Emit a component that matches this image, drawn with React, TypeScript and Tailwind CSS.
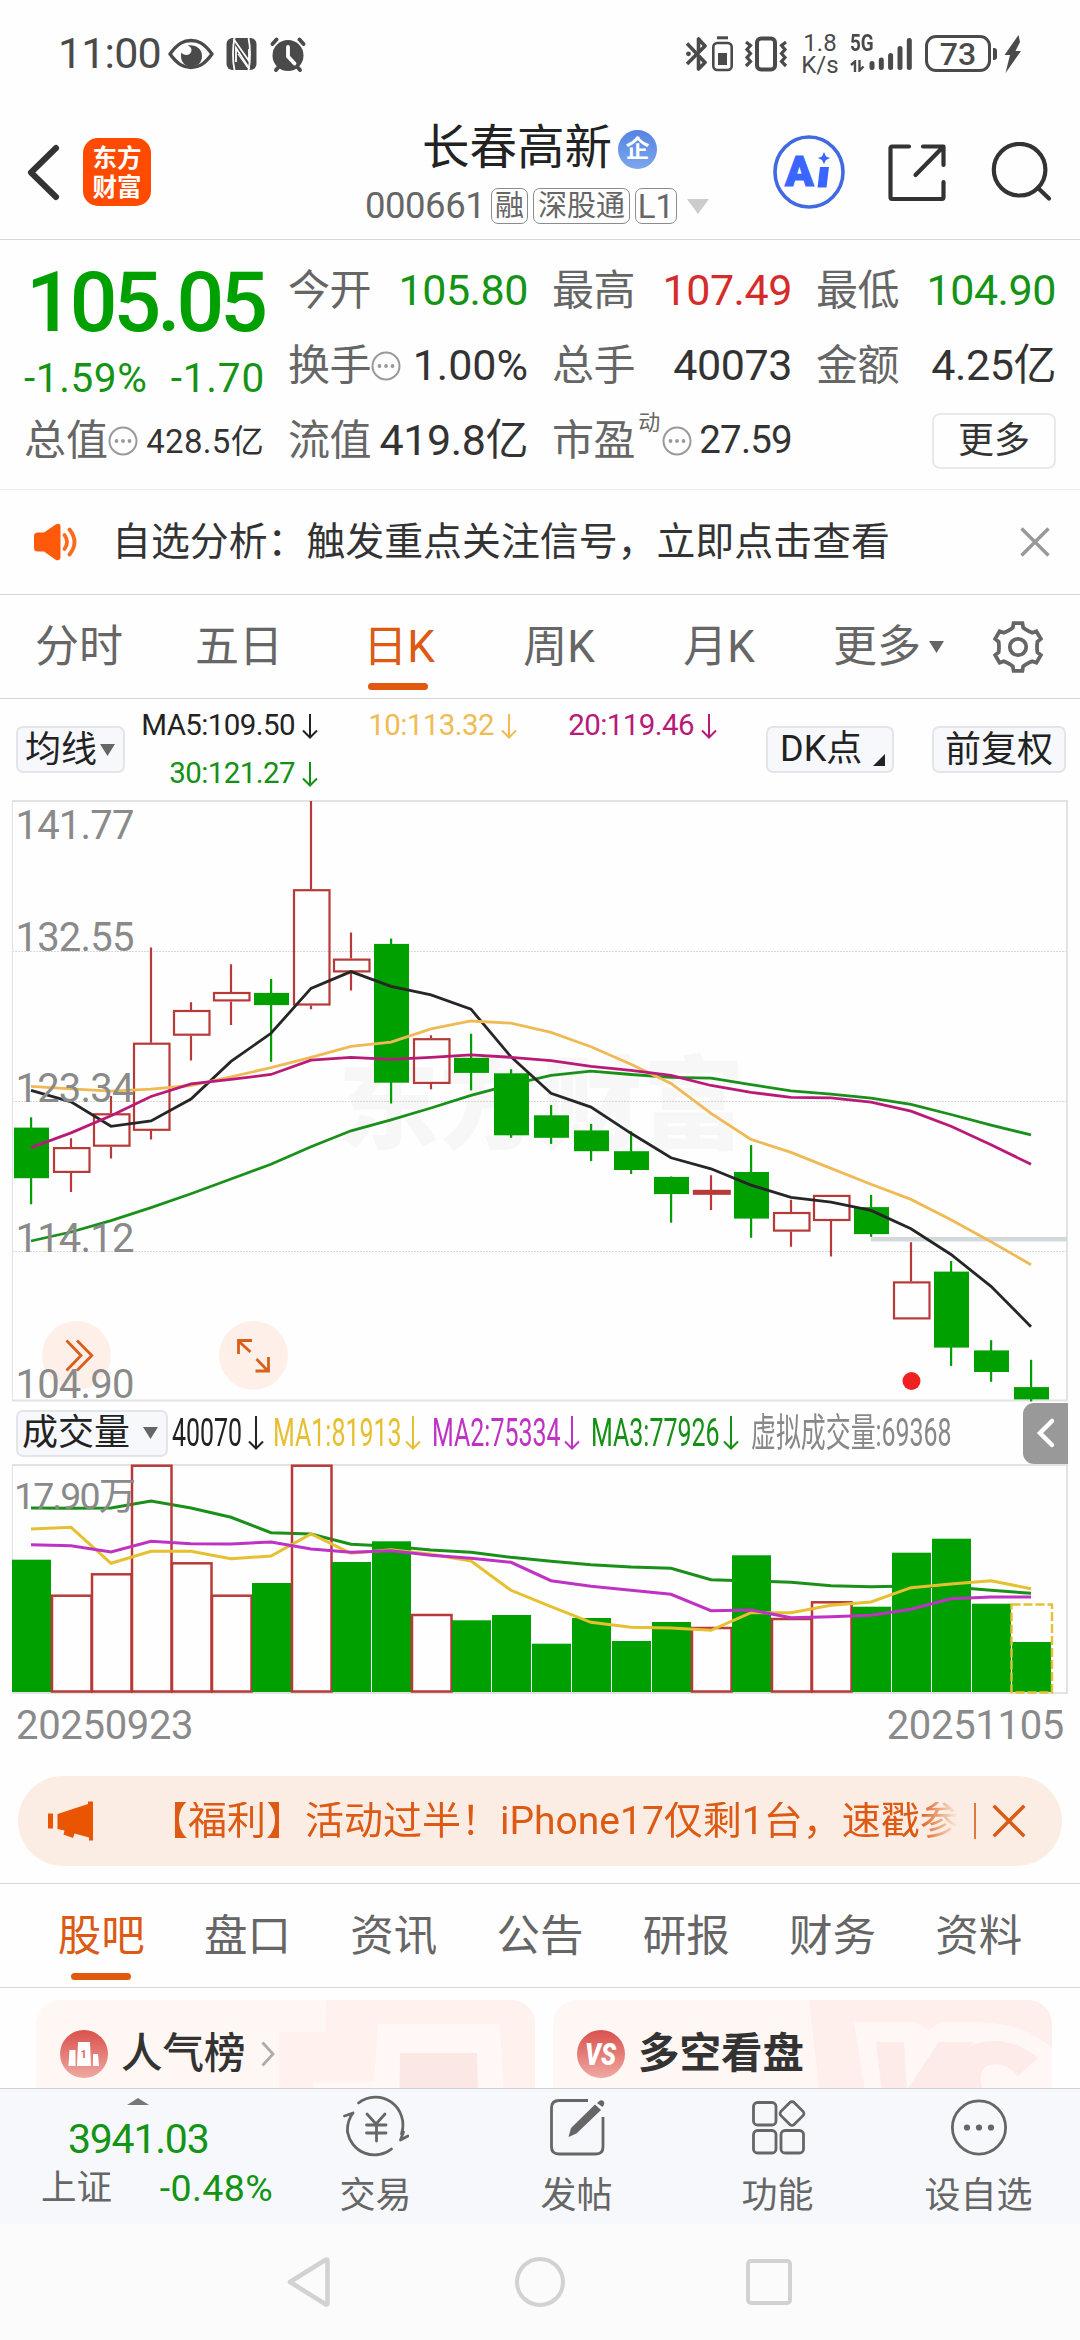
import React from "react";

type Candle = { up: boolean; hi: number; lo: number; top: number; bot: number };

const c = (up: number, hi: number, lo: number, top: number, bot: number): Candle => ({ up: up === 1, hi, lo, top, bot });

const candles: Candle[] = [
  c(0, 327.3, 414.3, 337.6, 388.2),
  c(1, 348.2, 402, 357.1, 382.9),
  c(1, 306.1, 368.6, 323.3, 356.7),
  c(1, 157.6, 349.4, 252.7, 340.8),
  c(1, 212.2, 270.6, 220, 245.7),
  c(1, 174.3, 235.1, 202, 211.4),
  c(0, 189, 271.8, 202.9, 215.1),
  c(1, 11, 219.2, 99.2, 215.5),
  c(1, 142.4, 200.4, 168.6, 182.4),
  c(0, 148.6, 313.5, 153.9, 292.7),
  c(1, 245.3, 299.2, 248.2, 293.9),
  c(0, 243.7, 300.4, 267.8, 282.9),
  c(0, 279.2, 347.8, 283.3, 345.3),
  c(0, 315.1, 353.9, 325.3, 347.8),
  c(0, 333.9, 371, 340.4, 361.2),
  c(0, 341.2, 384, 361.2, 380),
  c(0, 386.5, 432.7, 386.9, 404.1),
  c(1, 385.3, 420, 400, 404.5),
  c(0, 355.1, 447.8, 382, 428.6),
  c(1, 409.8, 456.7, 422, 441.6),
  c(1, 405.3, 466.5, 404.9, 431),
  c(0, 404.9, 446.9, 417.1, 444.1),
  c(1, 452.2, 529.4, 491.4, 529.4),
  c(0, 471, 575.9, 481.6, 557.6),
  c(0, 550.2, 591.8, 560.4, 582),
  c(0, 569.8, 611.4, 597.1, 609.4),
];

const ma5 = [300.4, 311.8, 336.3, 331, 309, 271.4, 243.3, 198.4, 181.6, 196.3, 204.9, 219.2, 266.9, 303.3, 317.1, 343.3, 367.8, 378.8, 395.1, 407.3, 412.2, 420.4, 438.8, 464.5, 496.3, 536.7];
const ma10 = [296.3, 298.8, 301.2, 299.2, 295.5, 286.9, 277.6, 267.3, 256.3, 252.2, 238.8, 231, 233.1, 242.4, 256.7, 274.3, 293.5, 323.3, 349.4, 362.4, 378.4, 394.3, 409.4, 429.8, 451.8, 474.7];
const ma20 = [357.6, 342.9, 325.7, 306.5, 293.9, 289.4, 284.5, 270.2, 267.3, 269.4, 267.3, 264.9, 267.3, 270.6, 276.3, 280.4, 285.3, 295.5, 302.4, 307.3, 307.8, 312.2, 321.2, 336.3, 354.7, 374.3];
const ma30 = [451, 442, 430.6, 417.6, 403.7, 389, 374.3, 356.7, 340.8, 329.8, 318, 305.3, 294.7, 285.3, 281.2, 284.5, 287.3, 288.2, 294.7, 300.8, 304.1, 308.2, 314.3, 324.5, 335.1, 344.9];

const volTop = [159.7, 195.7, 174.3, 65.7, 163.3, 195.7, 183, 65.7, 162, 141.3, 215, 220.3, 215, 243.7, 218, 241, 222, 228, 155.3, 219, 202.3, 206.7, 152.7, 138.7, 203.7, 242];
const volHollow = [1, 2, 3, 4, 5, 7, 10, 17, 19, 20];
const vol1 = [129, 127.3, 163.3, 151.3, 151.3, 158.7, 156, 134, 153.3, 149.7, 154.3, 161, 190.3, 206.7, 222.3, 227.3, 228, 230.3, 212.7, 212.7, 205.3, 202, 187.7, 184, 180.7, 188.7];
const vol2 = [144.7, 145.7, 152, 141.3, 143.7, 144, 142, 149, 152.3, 150.7, 155.3, 158.3, 162.3, 180.7, 186.3, 190.3, 194.3, 210.7, 210, 217.7, 216.7, 215.3, 209.3, 198.7, 197, 197];
const vol3 = [108, 108.3, 108, 101, 108, 117.3, 132.7, 134, 144.3, 146.3, 150, 152.3, 157.3, 161.3, 164.7, 167, 168.3, 179.7, 181, 182.3, 185.7, 186.7, 186, 187, 190.3, 193.3];

const cx = (i: number) => 31 + 40 * i;
const pts = (a: number[]) => a.map((y, i) => `${cx(i)},${y}`).join(" ");

const RED = "#b83a38";
const GREEN = "#00a000";

function PriceChart() {
  const labels: [string, number][] = [
    ["141.77", 49],
    ["132.55", 161],
    ["123.34", 312],
    ["114.12", 462],
    ["104.90", 608],
  ];
  return (
    <svg className="block overflow-visible" width="1080" height="602" viewBox="0 10 1080 602">
      <text x="338" y="351" fontSize="101" fontWeight="900" fill="#f7f7f7" textLength="406">东方财富</text>
      {[161.5, 311.5, 461.5].map((y) => (
        <line key={y} x1="12" x2="1067" y1={y} y2={y} stroke="#d9d9d9" strokeWidth="1" strokeDasharray="2 1" />
      ))}
      <path d="M12.5 11V611" stroke="#e2e2e2" strokeWidth="1" />
      <path d="M12 11H1067V610.5H12" stroke="#e2e2e2" strokeWidth="2" fill="none" />
      <rect x="871" y="447" width="196" height="4.5" fill="#d3d8da" />
      <polyline points={pts(ma30)} fill="none" stroke="#1a901a" strokeWidth="2.8" />
      {candles.map((k, i) => {
        const x = cx(i);
        return k.up ? (
          <g key={i} stroke={RED} strokeWidth="2.2" fill="none">
            <path d={`M${x} ${k.hi}V${k.top}M${x} ${k.bot}V${k.lo}`} />
            <rect x={x - 17} y={k.top + 1} width="35.5" height={k.bot - k.top - 2} fill="none" />
            {i === 17 && <rect x={x - 17} y="401" width="35.5" height="2.5" fill={RED} />}
          </g>
        ) : (
          <g key={i} fill={GREEN}>
            <rect x={x - 1} y={k.hi} width="2.2" height={k.lo - k.hi} />
            <rect x={x - 17} y={k.top} width="35" height={k.bot - k.top} />
          </g>
        );
      })}
      <g fill="none" strokeWidth="2.8">
        <polyline points={pts(ma5)} stroke="#262626" />
        <polyline points={pts(ma10)} stroke="#efba55" />
        <polyline points={pts(ma20)} stroke="#b91a78" />
      </g>
      <circle cx="911.5" cy="591" r="9" fill="#f02020" />
      <circle cx="76.5" cy="565.3" r="34.5" fill="#fef0e9" />
      <circle cx="253.5" cy="565.3" r="34.5" fill="#fef0e9" />
      <g fill="none" stroke="#d9601a" strokeWidth="2.8">
        <path d="M66.5 550.5L81 565.5L66.5 580.5M77 550.5L91.8 565.5L77 580.5" />
        <path d="M238.5 564V550.5H252M239 551.5L250.5 562M255.5 581H268.5V567M267.5 580.5L256.5 569" />
      </g>
      {labels.map(([t, y]) => (
        <text key={t} x="15.5" y={y - 0.5} fontSize="40" fill="#8a8a8a" letterSpacing="-0.8">
          {t}
        </text>
      ))}
    </svg>
  );
}

function VolumeChart() {
  return (
    <svg className="block" width="1080" height="232" viewBox="0 64 1080 232">
      <path d="M12.5 65V293" stroke="#e2e2e2" strokeWidth="1" />
      <path d="M12 65H1067V293H12" stroke="#e2e2e2" strokeWidth="2" fill="none" />
      <polyline points={pts(vol3)} fill="none" stroke="#1a901a" strokeWidth="3" />
      {volTop.map((t, i) => {
        const x = cx(i);
        return volHollow.includes(i) ? (
          <rect key={i} x={x - 19} y={t} width="39.5" height={291.5 - t} fill="none" stroke={RED} strokeWidth="2.5" />
        ) : (
          <rect key={i} x={x - 19} y={t} width="39" height={292 - t} fill={GREEN} />
        );
      })}
      <rect x="1011.5" y="204.5" width="40.5" height="88" fill="none" stroke="#e6bf35" strokeWidth="2.4" strokeDasharray="9 3" />
      <g fill="none" strokeWidth="3">
        <polyline points={pts(vol1)} stroke="#e6c030" />
        <polyline points={pts(vol2)} stroke="#be32c4" />
      </g>
      <text x="14" y="108.5" fontSize="37.5" fill="#8a8a8a" letterSpacing="-1.9">
        17.90万
      </text>
    </svg>
  );
}

function Dots() {
  return (
    <svg width="30" height="30" viewBox="0 0 30 30" className="shrink-0">
      <circle cx="15" cy="15" r="13.5" fill="none" stroke="#999" strokeWidth="2" />
      <g fill="#999">
        <circle cx="8.5" cy="15" r="1.9" />
        <circle cx="15" cy="15" r="1.9" />
        <circle cx="21.5" cy="15" r="1.9" />
      </g>
    </svg>
  );
}

function Arrow({ h = 25 }: { h?: number }) {
  return (
    <svg width="16" height={h} viewBox={`0 0 16 ${h}`} fill="none" stroke="currentColor" strokeWidth="2" className="shrink-0">
      <path d={`M8 0V${h - 1.5}M1 ${h - 8.5}L8 ${h - 1.5}L15 ${h - 8.5}`} />
    </svg>
  );
}

function Tri({ className }: { className: string }) {
  return (
    <svg viewBox="0 0 10 8" preserveAspectRatio="none" className={className}>
      <path d="M0 0H10L5 8Z" fill="currentColor" />
    </svg>
  );
}

function Cross({ className }: { className: string }) {
  return (
    <svg viewBox="0 0 30 30" className={className} fill="none" stroke="currentColor">
      <path d="M1.5 1.5L28.5 28.5M28.5 1.5L1.5 28.5" />
    </svg>
  );
}

function Gear() {
  const tooth = [
    [-7.6, -17.6],
    [-5.2, -19.4],
    [-4.4, -23.8],
    [4.4, -23.8],
    [5.2, -19.4],
    [7.6, -17.6],
  ];
  const p: string[] = [];
  for (let k = 0; k < 6; k++) {
    const a = (k * Math.PI) / 3;
    for (const [x, y] of tooth) p.push(`${x * Math.cos(a) - y * Math.sin(a)},${x * Math.sin(a) + y * Math.cos(a)}`);
  }
  return (
    <svg width="54" height="54" viewBox="-27 -27 54 54" fill="none" stroke="#666" strokeWidth="3.8">
      <polygon points={p.join(" ")} />
      <circle r="8.2" />
    </svg>
  );
}

function StatusBar() {
  return (
    <div className="flex h-[107px] items-center text-[#4a4a4a]">
      <span className="ml-[58px] w-[110px] text-[43px] tracking-[-0.02em] leading-none">11:00</span>
      <svg width="46" height="34" viewBox="0 0 46 34" fill="none">
        <path d="M2 17C10 6 16 3.5 23 3.5S36 6 44 17C36 28 30 30.5 23 30.5S10 28 2 17Z" stroke="#4a4a4a" strokeWidth="3.4" strokeLinejoin="round" />
        <path d="M20 8.5C28 7.5 34 12 34 19C34 26 29 29.5 23 29.5C17 29.5 13 25 13 19C13 17.5 13.2 16.5 13.5 15.5C15 18.5 20 19 22.5 16C24.5 13.5 23.5 10 20 8.5Z" fill="#4a4a4a" />
      </svg>
      <svg width="31" height="34" viewBox="0 0 31 34" className="ml-[12px]">
        <rect x="0.5" y="1" width="30" height="32" rx="6" fill="#4a4a4a" />
        <g fill="none" stroke="#fff" strokeWidth="1.8">
          <path d="M8.5 1C6.5 10 6.5 24 8.5 33M22.5 1C24.5 10 24.5 24 22.5 33" />
          <path d="M7.5 2L23 24V12M23.5 32L10 11V25" />
          <path d="M12 17L22 31" strokeWidth="1.2" />
        </g>
      </svg>
      <svg width="36" height="36" viewBox="0 0 36 36" className="ml-[13px]" fill="none" stroke="#4a4a4a" strokeLinecap="round">
        <circle cx="18" cy="19.5" r="15.5" fill="#4a4a4a" stroke="none" />
        <path d="M2.5 8L6.5 3.5M33.5 8L29.5 3.5" strokeWidth="3.8" />
        <path d="M6 34L9 30.5M30 34L27 30.5" strokeWidth="3.8" />
        <path d="M18 11V20.5L24.5 27.5" stroke="#fff" strokeWidth="3.8" />
      </svg>
      <svg width="22" height="36" viewBox="0 0 22 36" className="ml-[380px]" fill="none" stroke="#4a4a4a" strokeWidth="3.6">
        <path d="M1 7.5L19 26.5L12.5 33V21M1 28L19 10L12.5 3V15" strokeLinejoin="round" />
        <circle cx="2.5" cy="17.8" r="2.4" fill="#4a4a4a" stroke="none" />
      </svg>
      <svg width="21" height="36" viewBox="0 0 21 36" className="ml-[4px]" fill="none" stroke="#4a4a4a">
        <path d="M5 1.8H16" strokeWidth="3" />
        <rect x="1.3" y="7" width="18.4" height="27" rx="4" strokeWidth="2.6" />
        <rect x="6" y="17" width="9" height="12" fill="#4a4a4a" stroke="none" />
      </svg>
      <svg width="44" height="36" viewBox="0 0 44 36" className="ml-[11px]" fill="none" stroke="#4a4a4a" strokeWidth="3.2">
        <rect x="13" y="2.5" width="18" height="31" rx="4" strokeWidth="4" />
        <path d="M2 6L6.5 9.5L3 13.5L6.5 17.5L3 21.5L6.5 25.5L2 30" />
        <path d="M42 6L37.5 9.5L41 13.500L37.500 17.500L41 21.500L37.500 25.500L42 30" />
      </svg>
      <div className="ml-[13px] flex w-[38px] flex-col items-center text-[24px] leading-[22px]">
        <span>1.8</span>
        <span>K/s</span>
      </div>
      <div className="ml-[11px] flex h-[36px] w-[20px] flex-col justify-between">
        <span className="mt-[-2px] origin-left scale-x-[0.82] text-[23px] font-bold leading-[20px]">5G</span>
        <svg width="15" height="12" viewBox="0 0 15 12" fill="none" stroke="#4a4a4a" strokeWidth="2.4">
          <path d="M1 5L5 1.5V12M9.5 0V10.5L13.5 6.5" />
        </svg>
      </div>
      <svg width="44" height="36" viewBox="0 0 44 36" className="ml-[-1px]" stroke="#4a4a4a" strokeWidth="5" strokeLinecap="round">
        <path d="M3 27.5V31.5M12.3 24V31.5M21.6 19.5V31.5M31 12.5V31.5M40.3 4.5V31.5" />
      </svg>
      <div className="ml-[12px] flex h-[37px] w-[66px] items-center justify-center rounded-[11px] border-[3px] border-[#4a4a4a] text-[32px] font-medium leading-none">
        73
      </div>
      <div className="ml-[2px] h-[12px] w-[4px] rounded-r-[3px] bg-[#4a4a4a]" />
      <svg width="17" height="38" viewBox="0 0 17 38" className="ml-[7px]">
        <path d="M14.5 0L0.500 20H6L1.500 38L17 16H11.500L16 7Z" fill="#4a4a4a" />
      </svg>
    </div>
  );
}

function Header() {
  return (
    <div className="flex h-[133px] border-b border-[#d6d6d6]">
      <svg width="36" height="60" viewBox="0 0 36 60" className="ml-[25px] mt-[35px]" fill="none" stroke="#333" strokeWidth="6" strokeLinecap="round" strokeLinejoin="round">
        <path d="M31 6L6 30.5L31 55" />
      </svg>
      <div className="ml-[22px] mt-[31px] flex h-[68px] w-[68px] flex-col items-center justify-center rounded-[15px] bg-[#ff4a00] pt-[2px] text-[24.5px] font-bold leading-[29px] text-white">
        <span>东方</span>
        <span>财富</span>
      </div>
      <div className="ml-[214px] flex w-[346px] flex-col">
        <div className="mt-[14px] flex h-[56px] items-center">
          <span className="ml-[57px] text-[47.5px] leading-none text-[#222]">长春高新</span>
          <span className="ml-[6px] flex h-[39px] w-[39px] items-center justify-center rounded-full bg-linear-to-b from-[#5583e2] to-[#7ca7ec] text-[24px] font-bold leading-none text-white">
            企
          </span>
        </div>
        <div className="mt-[10px] flex h-[38px] items-center text-[29px] leading-none text-[#666]">
          <span className="w-[126px] text-[36.5px] tracking-[-0.013em]">000661</span>
          <span className="flex h-[36px] w-[37px] items-center justify-center rounded-[7px] border border-[#8c8c8c]">融</span>
          <span className="ml-[5px] flex h-[36px] w-[97px] items-center justify-center rounded-[7px] border border-[#8c8c8c]">深股通</span>
          <span className="ml-[5px] flex h-[36px] w-[42px] items-center justify-center rounded-[7px] border border-[#8c8c8c] text-[33px]">L1</span>
          <Tri className="ml-[10px] h-[15px] w-[22px] text-[#ccc]" />
        </div>
      </div>
      <svg width="74" height="76" viewBox="0 0 74 76" className="ml-[61px] mt-[27px]">
        <ellipse cx="37" cy="38" rx="34" ry="35" fill="none" stroke="#4169e1" strokeWidth="3.6" />
        <text x="13" y="51.5" fontSize="42" fontWeight="900" fill="#3a66ff" stroke="#3a66ff" strokeWidth="1.2">A</text>
        <path d="M48 33H57L54.5 53.5H45.5Z" fill="#3a66ff" />
        <path d="M52 18L54 22.5L58 24L54 26L52 30L50 26L46 24L50 22.5Z" fill="#3a66ff" />
      </svg>
      <svg width="62" height="62" viewBox="0 0 62 62" className="ml-[40px] mt-[35px]" fill="none" stroke="#333" strokeWidth="4.2" strokeLinecap="round" strokeLinejoin="round">
        <path d="M23 4.5H6Q4.5 4.5 4.5 6V55Q4.5 57 6 57H56Q57.5 57 57.5 55V40M37 4.5H57.5V23M57 5L29.5 33" />
      </svg>
      <svg width="64" height="64" viewBox="0 0 64 64" className="ml-[40px] mt-[35px]" fill="none" stroke="#333" strokeWidth="4.2" strokeLinecap="round">
        <circle cx="31.6" cy="27.7" r="25.8" />
        <path d="M50 46L61 56.5" />
      </svg>
    </div>
  );
}

function Quote({ label, value, color }: { label: string; value: string; color: string }) {
  return (
    <div className="flex items-center justify-between">
      <span className="text-[42px] text-[#666]">{label}</span>
      <span className={color}>{value}</span>
    </div>
  );
}

function Quotes() {
  return (
    <div className="flex h-[250px] border-b border-[#ebebeb] pl-[24px] leading-none">
      <div className="flex w-[240px] flex-col">
        <div className="mt-[21px] flex h-[84px] items-center pl-[2px] text-[84px] font-medium tracking-[-0.048em] text-[#00a000]">105.05</div>
        <div className="mt-[11px] flex h-[44px] items-center justify-between text-[40.5px] text-[#149414]">
          <span className="tracking-[0.015em]">-1.59%</span>
          <span className="mr-[-1px] tracking-[0.02em]">-1.70</span>
        </div>
        <div className="mt-[19px] flex h-[44px] items-center text-[#333]">
          <span className="text-[42px] text-[#666]">总值</span>
          <Dots />
          <span className="ml-auto text-[33px] tracking-[0.01em]">428.5亿</span>
        </div>
      </div>
      <div className="ml-[24px] grid h-[238px] w-[768px] grid-cols-3 grid-rows-3 gap-x-[24px] pt-[13px] text-[43px] tracking-[-0.01em] text-[#333]">
        <Quote label="今开" value="105.80" color="text-[#149414]" />
        <Quote label="最高" value="107.49" color="text-[#d52b2b]" />
        <Quote label="最低" value="104.90" color="text-[#149414]" />
        <div className="flex items-center">
          <span className="text-[42px] text-[#666]">换手</span>
          <Dots />
          <span className="ml-auto tracking-[0em]">1.00%</span>
        </div>
        <Quote label="总手" value="40073" color="text-[#333]" />
        <Quote label="金额" value="4.25亿" color="text-[#333]" />
        <Quote label="流值" value="419.8亿" color="text-[#333]" />
        <div className="flex items-center">
          <span className="text-[42px] text-[#666]">市盈</span>
          <span className="ml-[3px] mt-[-36px] text-[22px] text-[#666]">动</span>
          <span className="ml-[2px] flex">
            <Dots />
          </span>
          <span className="ml-auto text-[38.5px] tracking-[-0.02em]">27.59</span>
        </div>
        <div className="flex items-center justify-end">
          <span className="flex h-[56px] w-[124px] items-center justify-center rounded-[8px] border-2 border-[#e9e9e9] text-[36px] tracking-normal">更多</span>
        </div>
      </div>
    </div>
  );
}

function Notice() {
  return (
    <div className="flex h-[105px] items-center border-b border-[#d6d6d6]">
      <svg width="46" height="38" viewBox="0 0 46 38" className="ml-[33px]">
        <path d="M1 13Q1 9.5 5 9.5H11L23 1.2Q27.5 -0.5 27.5 4V34Q27.5 38 23 37L11 28.5H5Q1 28.5 1 25Z" fill="#ff5a0a" />
        <path d="M31.5 12Q36.5 19 31.5 26M36.5 6.5Q46.5 19 36.5 31.5" fill="none" stroke="#ff6a1e" strokeWidth="3.8" strokeLinecap="round" />
      </svg>
      <span className="ml-[33px] w-[802px] whitespace-nowrap text-[38.900px] leading-none text-[#333]">自选分析：触发重点关注信号，立即点击查看</span>
      <Cross className="ml-[106px] size-[30px] stroke-[3.5] text-[#999]" />
    </div>
  );
}

function PeriodTabs() {
  const tabs = ["分时", "五日", "日K", "周K", "月K"];
  return (
    <div className="flex h-[104px] items-center border-b border-[#d6d6d6] text-[44px] leading-none text-[#666]">
      <div className="ml-[-1px] flex h-full">
        {tabs.map((t) => (
          <div key={t} className="relative flex h-full w-[160px] items-center justify-center">
            <span className={t === "日K" ? "text-[#dc5a14]" : ""}>{t}</span>
            {t === "日K" && <span className="absolute bottom-[8px] left-[49px] h-[7px] w-[60px] rounded-full bg-[#e0590f]" />}
          </div>
        ))}
      </div>
      <span className="ml-[34px]">更多</span>
      <Tri className="ml-[8px] h-[12px] w-[15px]" />
      <div className="ml-[47px]">
        <Gear />
      </div>
    </div>
  );
}

function MaRow() {
  return (
    <div className="flex h-[101px] items-start text-[36px] leading-none text-[#222]">
      <div className="ml-[16px] mt-[27px] flex h-[47px] w-[109px] items-center rounded-[7px] border-2 border-[#e3e5e9] bg-[#f6f8fb] pl-[7px]">
        均线
        <Tri className="ml-[3px] h-[12px] w-[15px] text-[#666]" />
      </div>
      <div className="ml-[16px] mt-[8px] flex w-[177px] flex-col items-end text-[29.5px] tracking-[-0.02em]">
        <div className="flex h-[38px] items-center gap-[7px]">
          MA5:109.50
          <Arrow />
        </div>
        <div className="mt-[10px] flex h-[38px] items-center gap-[7px] text-[#149014]">
          30:121.27
          <Arrow />
        </div>
      </div>
      <div className="mt-[8px] flex h-[38px] w-[199px] items-center justify-end gap-[7px] text-[29.5px] tracking-[-0.02em] text-[#f0bb55]">
        10:113.32
        <Arrow />
      </div>
      <div className="mt-[8px] flex h-[38px] w-[200px] items-center justify-end gap-[7px] text-[29.5px] tracking-[-0.02em] text-[#b81a7a]">
        20:119.46
        <Arrow />
      </div>
      <div className="ml-[49px] mt-[27px] flex h-[47px] w-[128px] rounded-[7px] border-2 border-[#e3e5e9] bg-[#f6f8fb] pl-[12px] leading-[43px]">
        DK点
        <svg width="12" height="12" viewBox="0 0 12 12" className="ml-[11px] mt-[26px]">
          <path d="M12 0V12H0Z" fill="#222" />
        </svg>
      </div>
      <div className="ml-[38px] mt-[27px] flex h-[47px] w-[134px] items-center justify-center rounded-[7px] border-2 border-[#e3e5e9] bg-[#f6f8fb]">前复权</div>
    </div>
  );
}

function VolumeHeader() {
  const items = [
    { t: "40070", box: "w-[76px]", color: "text-[#222]", m: "w-[101px]" },
    { t: "MA1:81913", box: "w-[132px]", color: "text-[#e6c030]", m: "w-[159px]" },
    { t: "MA2:75334", box: "w-[132px]", color: "text-[#be32c4]", m: "w-[159px]" },
    { t: "MA3:77926", box: "w-[132px]", color: "text-[#149014]", m: "w-[160px]" },
  ];
  return (
    <div className="flex h-[62px] items-center text-[39.5px] leading-none">
      <div className="ml-[16px] flex h-[47px] w-[152px] items-center rounded-[7px] border-2 border-[#e3e5e9] bg-[#f6f8fb] pl-[4px] text-[36px] text-[#222]">
        成交量
        <Tri className="ml-[13px] h-[12px] w-[15px] text-[#666]" />
      </div>
      <div className="flex pl-[4px]">
        {items.map((it) => (
          <div key={it.t} className={"flex items-center " + it.m + " " + it.color}>
            <span className={"block shrink-0 " + it.box}>
              <span className="block w-max origin-left scale-x-[0.632] whitespace-nowrap">{it.t}</span>
            </span>
            <Arrow h={34} />
          </div>
        ))}
      </div>
      <span className="block w-[200px] text-[38.5px] text-[#888]">
        <span className="block w-max origin-left scale-x-[0.647] whitespace-nowrap">虚拟成交量:69368</span>
      </span>
      <div className="ml-auto mr-[12px] flex h-[61px] w-[45px] items-center justify-center rounded-l-[11px] bg-[#999]">
        <svg width="20" height="32" viewBox="0 0 20 32" fill="none" stroke="#fff" strokeWidth="4.5" strokeLinecap="round">
          <path d="M16 4L4 16L16 28" />
        </svg>
      </div>
    </div>
  );
}

function Promo() {
  return (
    <div className="mx-[18px] mb-[17px] mt-[20px] flex h-[90px] items-center rounded-full bg-[#fcede4] leading-none text-[#dc5a14]">
      <svg width="46" height="40" viewBox="0 0 46 40" className="ml-[30px] shrink-0">
        <path d="M0 12.5H5V27.5H0ZM9.5 13L40 3V0.5H45V39.5H41V36.5L26.5 32.5L25 37L15.5 33.5L16.5 29.5L9.5 28Z" fill="#ea5504" />
      </svg>
      <div className="ml-[55px] w-[809px] overflow-hidden whitespace-nowrap text-[39px] [mask-image:linear-gradient(to_right,#000_770px,transparent_809px)]">
        【福利】活动过半！iPhone17仅剩1台，速戳参
      </div>
      <div className="ml-[16px] h-[36px] w-[1.5px] bg-[#dc7a45]" />
      <Cross className="ml-[16px] size-[34px] stroke-[3] text-[#d95b16]" />
    </div>
  );
}

function SectionTabs() {
  const tabs = ["股吧", "盘口", "资讯", "公告", "研报", "财务", "资料"];
  return (
    <div className="grid h-[105px] grid-cols-7 border-y border-[#d6d6d6] px-[28px] text-[43.5px] leading-none text-[#666]">
      {tabs.map((t, i) => (
        <div key={t} className={"relative flex items-center justify-center pt-[3px] " + (i === 0 ? "text-[#dc5a14]" : "")}>
          {t}
          {i === 0 && <span className="absolute bottom-[7px] h-[7px] w-[60px] rounded-full bg-[#e0590f]" />}
        </div>
      ))}
    </div>
  );
}

function Cards() {
  return (
    <div className="flex h-[100px] gap-[18px] overflow-hidden pl-[36px] pt-[12px] text-[41.5px] font-bold leading-none text-[#333]">
      <div className="relative h-[140px] w-[499px] overflow-hidden rounded-[24px] bg-[#fff7f4]">
        <svg width="499" height="140" viewBox="0 0 499 140" className="absolute left-0 top-0">
          <path d="M290 0H499V140H243V32H289Z" fill="#fef1ee" />
          <path d="M342 24H464L470 140H277V82H338Z" fill="#fff8f6" />
          <path d="M364 53H441L443 140H363Z" fill="#fbe7e4" />
        </svg>
        <div className="relative flex h-[108px] items-center pl-[24px]">
          <svg width="48" height="48" viewBox="0 0 48 48">
            <defs>
              <linearGradient id="badge" x1="0" y1="0" x2="0" y2="1">
                <stop offset="0" stopColor="#d9504c" />
                <stop offset="1" stopColor="#f0a8a2" />
              </linearGradient>
            </defs>
            <circle cx="24" cy="24" r="24" fill="url(#badge)" />
            <path d="M9.5 20H15.5V36H8.5ZM18 12H30L31 36H17ZM33 24H38L39 36H33Z" fill="#fff" />
            <text x="20.5" y="27.5" fontSize="11" fontWeight="700" fill="#dc6a66">1</text>
          </svg>
          <span className="ml-[13px] font-medium">人气榜</span>
          <svg width="14" height="26" viewBox="0 0 14 26" className="ml-[15px]" fill="none" stroke="#b0aba9" strokeWidth="2.8">
            <path d="M1.5 1.5L12 13L1.5 24.5" />
          </svg>
        </div>
      </div>
      <div className="relative h-[140px] w-[499px] overflow-hidden rounded-[24px] bg-[#fff7f4]">
        <svg width="499" height="140" viewBox="0 0 499 140" className="absolute left-0 top-0">
          <path d="M256 0H499V140H272Z" fill="#feefed" />
          <path d="M301 22H362L376 30L388 22H420Q470 22 499 48V140H320Z" fill="#fff7f5" />
          <path d="M323 42H351L354 90L386 42H421Q404 58 398 90H370V110H331Z" fill="#fdebea" />
          <path d="M421 44Q456 34 485 58L465 76Q450 60 434 66Q424 72 430 90H396Q394 60 421 44Z" fill="#fdebea" />
        </svg>
        <div className="relative flex h-[108px] items-center pl-[24px]">
          <svg width="48" height="48" viewBox="0 0 48 48">
            <circle cx="24" cy="24" r="24" fill="url(#badge)" />
            <text x="8" y="35" fontSize="31" fontWeight="900" fontStyle="italic" fill="#fff" textLength="31" lengthAdjust="spacingAndGlyphs">VS</text>
          </svg>
          <span className="ml-[13px]">多空看盘</span>
        </div>
      </div>
    </div>
  );
}

function BottomBar() {
  const stroke = { fill: "none", stroke: "#666", strokeWidth: 2.8 };
  const items = [
    {
      t: "交易",
      icon: (
        <g {...stroke} strokeLinecap="round" strokeLinejoin="round">
          <path d="M17 8A27.5 28 0 0 1 60 39M6 37A27.5 28 0 0 0 50 54" transform="translate(-1.5 0)" />
          <path d="M1.5 21L10 18Q4 26 4.5 36M65 41L57.5 45L60.5 37" />
          <path d="M24 19L33 29L42 19M23.5 30H43M23.5 38H43M33.5 30V46" />
        </g>
      ),
    },
    {
      t: "发帖",
      icon: (
        <g>
          <path d="M44 5.5H15Q7.5 5.5 7.5 13V52Q7.5 59 15 59H52Q59 59 59 52V22" {...stroke} />
          <path d="M24.5 42L27 33L51 9.5L57 15L32.5 38.5Z" fill="#666" />
          <path d="M53 8L56 5.5Q59 4.5 60 7Q61 9 58.5 12Z" fill="#666" />
        </g>
      ),
    },
    {
      t: "功能",
      icon: (
        <g {...stroke}>
          <rect x="8.5" y="7.5" width="22.5" height="22.5" rx="4" />
          <rect x="8.5" y="35.5" width="22.5" height="22.5" rx="4" />
          <rect x="36" y="35.5" width="22.5" height="22.5" rx="4" />
          <rect x="-9.3" y="-9.3" width="18.6" height="18.6" rx="3" transform="translate(47 18.5) rotate(45)" />
        </g>
      ),
    },
    {
      t: "设自选",
      icon: (
        <g>
          <circle cx="33" cy="32.5" r="26.6" {...stroke} />
          <g fill="#666">
            <circle cx="21" cy="32.5" r="3.1" />
            <circle cx="33" cy="32.5" r="3.1" />
            <circle cx="45" cy="32.5" r="3.1" />
          </g>
        </g>
      ),
    },
  ];
  return (
    <div className="flex h-[136px] border-t border-[#cfd1d4] bg-[#f6f8fb] leading-none text-[#666]">
      <div className="flex w-[275px] flex-col">
        <svg width="22" height="7" viewBox="0 0 22 7" className="ml-[127px] mt-[9px]">
          <path d="M0 7L11 0L22 7Z" fill="#777" />
        </svg>
        <div className="ml-[68px] mt-[13px] flex h-[42px] items-center text-[41px] tracking-[-0.03em] text-[#149414]">3941.03</div>
        <div className="mt-[8px] flex h-[42px] items-center text-[35.5px]">
          <span className="ml-[41px]">上证</span>
          <span className="ml-auto mr-[2px] text-[37.5px] tracking-[0.01em] text-[#149414]">-0.48%</span>
        </div>
      </div>
      {items.map((it) => (
        <div key={it.t} className="flex w-[201px] flex-col items-center">
          <svg width="66" height="66" viewBox="0 0 66 66" className="mt-[6px]">
            {it.icon}
          </svg>
          <span className="mt-[17px] text-[36px]">{it.t}</span>
        </div>
      ))}
    </div>
  );
}

function NavBar() {
  return (
    <div className="flex h-[116px] items-center bg-[#fbfbfb]">
      <svg width="44" height="52" viewBox="0 0 44 52" className="ml-[287px]" fill="none" stroke="#d2d2d2" strokeWidth="4.5" strokeLinejoin="round">
        <path d="M3 26L39 3.5Q40.5 3.5 40.5 5V47Q40.5 48.5 39 48.5Z" />
      </svg>
      <div className="ml-[184px] size-[50px] rounded-full border-[4.5px] border-[#d2d2d2]" />
      <div className="ml-[181px] size-[46px] rounded-[5px] border-[4.5px] border-[#d2d2d2]" />
    </div>
  );
}

export default function App() {
  return (
    <div className="flex h-[2340px] w-[1080px] flex-col overflow-hidden bg-[#fefefe] font-['Roboto','Noto_Sans_CJK_SC',sans-serif] [&>*]:shrink-0">
      <StatusBar />
      <Header />
      <Quotes />
      <Notice />
      <PeriodTabs />
      <MaRow />
      <PriceChart />
      <VolumeHeader />
      <VolumeChart />
      <div className="flex h-[60px] items-center justify-between pl-[16px] pr-[16px] text-[40px] leading-none tracking-[-0.008em] text-[#8a8a8a]">
        <span>20250923</span>
        <span>20251105</span>
      </div>
      <Promo />
      <SectionTabs />
      <Cards />
      <BottomBar />
      <NavBar />
    </div>
  );
}
